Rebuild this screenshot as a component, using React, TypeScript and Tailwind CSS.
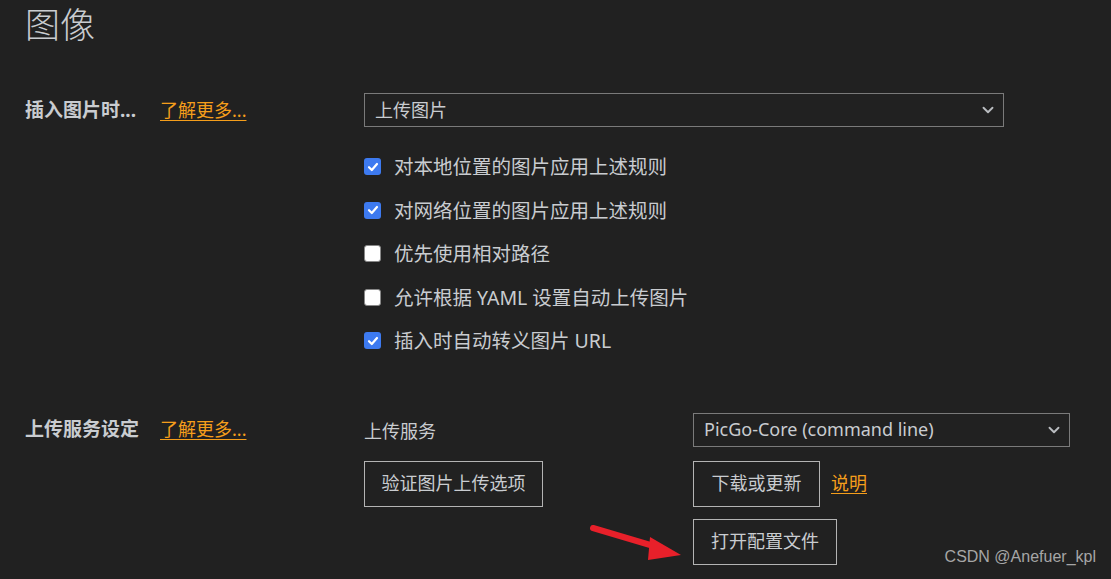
import { ChevronDown } from "lucide-react";

const font = { fontFamily: '"Noto Sans", "Noto Sans CJK SC", sans-serif' };

function Check({ checked, label }: { checked: boolean; label: string }) {
  return (
    <div className="flex items-center h-[43.5px]">
      {checked ? (
        <div className="w-[17px] h-[17px] rounded-[3px] bg-[#3d7af0] flex items-center justify-center">
          <svg width="12" height="12" viewBox="0 0 12 12">
            <path d="M2 6.2 L4.8 9 L10 3" fill="none" stroke="#fff" strokeWidth="2.2" strokeLinecap="round" strokeLinejoin="round" />
          </svg>
        </div>
      ) : (
        <div className="w-[17px] h-[17px] rounded-[3px] bg-white border border-[#888]" />
      )}
      <span className="ml-[13px] text-[19.5px] text-[#c9ccd0]">{label}</span>
    </div>
  );
}

function Select({ value, className }: { value: string; className: string }) {
  return (
    <div className={`h-[34px] border border-[#7a7a7a] flex items-center justify-between pl-[10px] pr-[6px] text-[18px] text-[#c9ccd0] ${className}`}>
      <span>{value}</span>
      <ChevronDown size={18} strokeWidth={2.5} className="text-[#b9bcc0]" />
    </div>
  );
}

function Btn({ label, className = "" }: { label: string; className?: string }) {
  return (
    <button className={`h-[46px] border border-[#b4b4b4] text-[18px] text-[#c9ccd0] flex items-center justify-center ${className}`}>
      {label}
    </button>
  );
}

function Link({ label }: { label: string }) {
  return <a className="text-[18px] text-[#f59e1b] underline underline-offset-[3px]">{label}</a>;
}

export default function App() {
  return (
    <div className="relative w-full h-[579px] overflow-hidden bg-[#212121] pl-[25px]" style={font}>
      <h1 className="text-[35px] leading-none font-light text-[#c9ccd0] pt-[7px]">图像</h1>

      {/* Insert images */}
      <div className="flex mt-[51px]">
        <div className="w-[339px] flex items-center h-[34px]">
          <span className="w-[135px] text-[19px] font-bold text-[#c9ccd0] whitespace-nowrap">插入图片时...</span>
          <Link label="了解更多..." />
        </div>
        <div className="flex flex-col">
          <Select value="上传图片" className="w-[640px]" />
          <div className="flex flex-col mt-[18px]">
            <Check checked label="对本地位置的图片应用上述规则" />
            <Check checked label="对网络位置的图片应用上述规则" />
            <Check checked={false} label="优先使用相对路径" />
            <Check checked={false} label="允许根据 YAML 设置自动上传图片" />
            <Check checked label="插入时自动转义图片 URL" />
          </div>
        </div>
      </div>

      {/* Upload service */}
      <div className="flex mt-[50px]">
        <div className="w-[339px] flex items-center h-[34px]">
          <span className="w-[135px] text-[19px] font-bold text-[#c9ccd0] whitespace-nowrap">上传服务设定</span>
          <Link label="了解更多..." />
        </div>
        <div className="flex flex-col">
          <div className="flex items-center">
            <span className="w-[329px] text-[18px] text-[#c9ccd0] pt-[4px]">上传服务</span>
            <Select value="PicGo-Core (command line)" className="w-[377px]" />
          </div>
          <div className="flex mt-[14px]">
            <Btn label="验证图片上传选项" className="w-[179px]" />
            <div className="ml-[150px] flex flex-col gap-[12px]">
              <div className="flex items-center gap-[11px]">
                <Btn label="下载或更新" className="w-[127px]" />
                <Link label="说明" />
              </div>
              <Btn label="打开配置文件" className="w-[144px]" />
            </div>
          </div>
        </div>
      </div>

      {/* annotation arrow */}
      <svg className="absolute left-[585px] top-[520px]" width="100" height="45" viewBox="0 0 100 45">
        <path d="M8 8 L72 27" stroke="#e8202a" strokeWidth="6" strokeLinecap="round" />
        <path d="M96 35 L65 17 L63 40 Z" fill="#e8202a" />
      </svg>

      <div className="absolute right-[15px] bottom-[10px] text-[16px] text-[#a6a6a6]" style={{ fontFamily: '"Liberation Sans", sans-serif' }}>
        CSDN @Anefuer_kpl
      </div>
    </div>
  );
}
